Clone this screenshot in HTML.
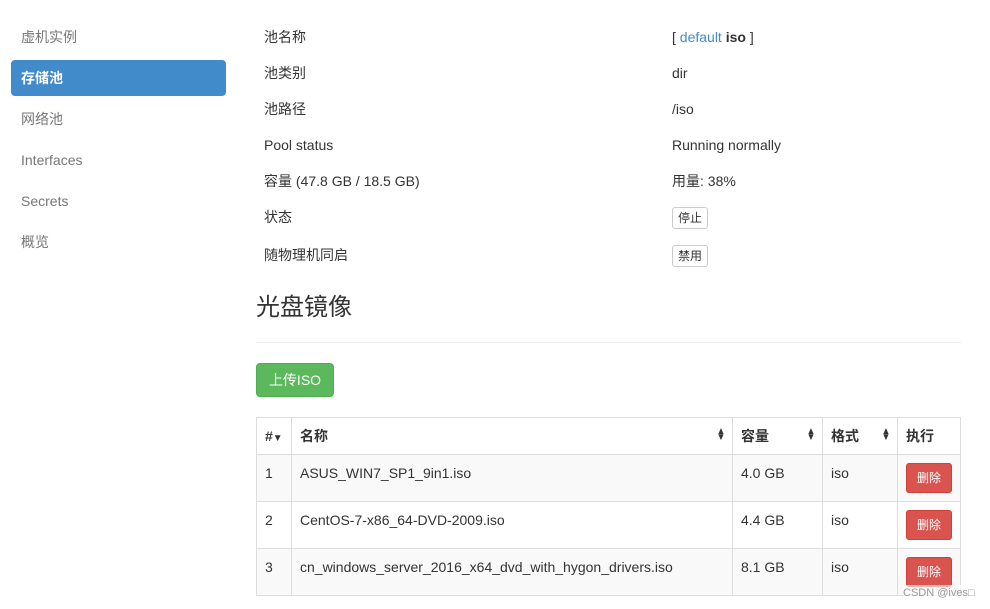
<!DOCTYPE html>
<html><head><meta charset="utf-8"><style>
*{margin:0;padding:0;box-sizing:border-box}
body{width:990px;height:609px;background:#fff;font-family:"Liberation Sans","Noto Sans CJK SC",sans-serif;font-size:14px;color:#333;position:relative;overflow:hidden}
.a{position:absolute;white-space:nowrap;line-height:20px}
.nav{color:#777}
.act{position:absolute;left:11px;top:60px;width:215px;height:36px;background:#428bca;border-radius:4px;color:#fff;font-weight:bold;padding-left:10px;line-height:36px}
.btn{position:absolute;left:672px;width:36px;height:22px;border:1px solid #ccc;border-radius:3px;font-size:12px;text-align:center;line-height:20px;background:#fff}
table{position:absolute;left:256px;top:417px;width:705px;border-collapse:collapse}
td,th{border:1px solid #ddd;padding:0 8px;text-align:left;vertical-align:top}
th{height:37px;vertical-align:middle;font-weight:600;position:relative}
td{height:47px;padding-top:10px}
tr.o td{background:#f9f9f9}
.s{position:absolute;right:6px;top:11px;font-size:10px;line-height:6px;color:#333;transform:scaleX(.9)}
.del{display:inline-block;width:46px;height:30px;background:#d9534f;border:1px solid #d43f3a;border-radius:3px;color:#fff;font-size:12px;text-align:center;line-height:28px}
</style></head><body>
<div class="a nav" style="left:21px;top:27px">虚机实例</div>
<div class="act">存储池</div>
<div class="a nav" style="left:21px;top:109px">网络池</div>
<div class="a nav" style="left:21px;top:150px">Interfaces</div>
<div class="a nav" style="left:21px;top:191px">Secrets</div>
<div class="a nav" style="left:21px;top:232px">概览</div>

<div class="a" style="left:264px;top:27px">池名称</div>
<div class="a" style="left:672px;top:27px">[ <span style="color:#428bca">default</span> <b>iso</b> ]</div>
<div class="a" style="left:264px;top:63px">池类别</div>
<div class="a" style="left:672px;top:63px">dir</div>
<div class="a" style="left:264px;top:99px">池路径</div>
<div class="a" style="left:672px;top:99px">/iso</div>
<div class="a" style="left:264px;top:135px">Pool status</div>
<div class="a" style="left:672px;top:135px">Running normally</div>
<div class="a" style="left:264px;top:171px">容量 (47.8 GB / 18.5 GB)</div>
<div class="a" style="left:672px;top:171px">用量: 38%</div>
<div class="a" style="left:264px;top:207px">状态</div>
<div class="btn" style="top:207px">停止</div>
<div class="a" style="left:264px;top:245px">随物理机同启</div>
<div class="btn" style="top:245px">禁用</div>

<div class="a" style="left:256px;top:294px;font-size:24px;line-height:28px">光盘镜像</div>
<div style="position:absolute;left:256px;top:342px;width:705px;height:1px;background:#eee"></div>
<div style="position:absolute;left:256px;top:363px;width:78px;height:34px;background:#5cb85c;border:1px solid #4cae4c;border-radius:4px;color:#fff;text-align:center;line-height:32px">上传ISO</div>

<table>
<tr><th style="width:35px">#<span style="font-size:10px">▼</span></th><th style="width:441px">名称<span class="s">▲<br>▼</span></th><th style="width:90px">容量<span class="s">▲<br>▼</span></th><th style="width:75px">格式<span class="s">▲<br>▼</span></th><th>执行</th></tr>
<tr class="o"><td>1</td><td>ASUS_WIN7_SP1_9in1.iso</td><td>4.0 GB</td><td>iso</td><td style="padding-top:8px"><span class="del">删除</span></td></tr>
<tr><td>2</td><td>CentOS-7-x86_64-DVD-2009.iso</td><td>4.4 GB</td><td>iso</td><td style="padding-top:8px"><span class="del">删除</span></td></tr>
<tr class="o"><td>3</td><td>cn_windows_server_2016_x64_dvd_with_hygon_drivers.iso</td><td>8.1 GB</td><td>iso</td><td style="padding-top:8px"><span class="del">删除</span></td></tr>
</table>
<div class="a" style="left:903px;top:585px;font-size:11px;color:#999;line-height:16px;background:rgba(255,255,255,.6)">CSDN @ives□</div>
</body></html>
